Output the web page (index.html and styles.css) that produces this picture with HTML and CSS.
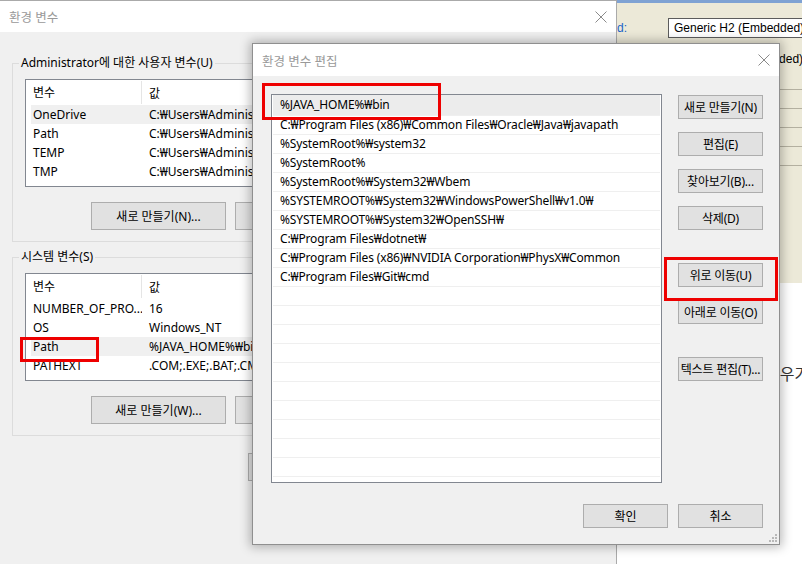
FILE: index.html
```html
<!DOCTYPE html>
<html lang="ko">
<head>
<meta charset="utf-8">
<title>환경 변수 편집</title>
<link rel="stylesheet" href="styles.css">
</head>
<body>
<div class="desktop">

  <!-- background application window (right) -->
  <div class="app">
    <div class="app-strip"></div>
    <div class="app-row app-row-first">
      <span class="app-label">d:</span>
      <span class="app-combo">Generic H2 (Embedded)</span>
    </div>
    <div class="app-row app-row-second">
      <span class="app-field">Generic H2 (Embedded)</span>
    </div>
    <div class="app-lines">
      <div class="app-line"></div>
      <div class="app-line"></div>
      <div class="app-line"></div>
      <div class="app-line"></div>
      <div class="app-line"></div>
    </div>
    <div class="app-white">
      <span class="app-text">경우가</span>
    </div>
  </div>

  <!-- back dialog: 환경 변수 -->
  <section class="win back">
    <header class="titlebar">
      <span class="title">환경 변수</span>
      <svg class="close" width="12" height="12" viewBox="0 0 12 12"><path d="M0.5 0.5L11.5 11.5M11.5 0.5L0.5 11.5" stroke="#8a8a8a" stroke-width="1" fill="none"/></svg>
    </header>
    <div class="back-body">
      <fieldset class="group group-user">
        <legend>Administrator에 대한 사용자 변수(U)</legend>
        <div class="varlist">
          <div class="var-head"><span class="c1">변수</span><span class="c2">값</span></div>
          <div class="var-row sel"><span class="c1">OneDrive</span><span class="c2">C:₩Users₩Administrator₩OneDrive</span></div>
          <div class="var-row"><span class="c1">Path</span><span class="c2">C:₩Users₩Administrator₩AppData₩Local</span></div>
          <div class="var-row"><span class="c1">TEMP</span><span class="c2">C:₩Users₩Administrator₩AppData₩Local₩Temp</span></div>
          <div class="var-row"><span class="c1">TMP</span><span class="c2">C:₩Users₩Administrator₩AppData₩Local₩Temp</span></div>
        </div>
        <div class="btnrow">
          <button class="btn btn-big">새로 만들기(N)...</button>
          <button class="btn btn-big">편집(E)...</button>
          <button class="btn btn-big">삭제(D)</button>
        </div>
      </fieldset>
      <fieldset class="group group-sys">
        <legend>시스템 변수(S)</legend>
        <div class="varlist">
          <div class="var-head"><span class="c1">변수</span><span class="c2">값</span></div>
          <div class="var-row"><span class="c1">NUMBER_OF_PRO...</span><span class="c2">16</span></div>
          <div class="var-row"><span class="c1">OS</span><span class="c2">Windows_NT</span></div>
          <div class="var-row sel"><span class="c1">Path</span><span class="c2">%JAVA_HOME%₩bin;C:₩Program Files</span></div>
          <div class="var-row"><span class="c1">PATHEXT</span><span class="c2">.COM;.EXE;.BAT;.CMD;.VBS</span></div>
        </div>
        <div class="btnrow">
          <button class="btn btn-big">새로 만들기(W)...</button>
          <button class="btn btn-big">편집(I)...</button>
          <button class="btn btn-big">삭제(L)</button>
        </div>
      </fieldset>
      <div class="back-footer">
        <button class="btn btn-big">확인</button>
        <button class="btn btn-big">취소</button>
      </div>
    </div>
  </section>

  <!-- front dialog: 환경 변수 편집 -->
  <section class="win front">
    <header class="titlebar">
      <span class="title">환경 변수 편집</span>
      <svg class="close" width="12" height="12" viewBox="0 0 12 12"><path d="M0.5 0.5L11.5 11.5M11.5 0.5L0.5 11.5" stroke="#8a8a8a" stroke-width="1" fill="none"/></svg>
    </header>
    <div class="front-body">
      <div class="pathlist">
        <div class="path-row sel">%JAVA_HOME%₩bin</div>
        <div class="path-row">C:₩Program Files (x86)₩Common Files₩Oracle₩Java₩javapath</div>
        <div class="path-row">%SystemRoot%₩system32</div>
        <div class="path-row">%SystemRoot%</div>
        <div class="path-row">%SystemRoot%₩System32₩Wbem</div>
        <div class="path-row">%SYSTEMROOT%₩System32₩WindowsPowerShell₩v1.0₩</div>
        <div class="path-row">%SYSTEMROOT%₩System32₩OpenSSH₩</div>
        <div class="path-row">C:₩Program Files₩dotnet₩</div>
        <div class="path-row">C:₩Program Files (x86)₩NVIDIA Corporation₩PhysX₩Common</div>
        <div class="path-row">C:₩Program Files₩Git₩cmd</div>
        <div class="path-row"></div>
        <div class="path-row"></div>
        <div class="path-row"></div>
        <div class="path-row"></div>
        <div class="path-row"></div>
        <div class="path-row"></div>
        <div class="path-row"></div>
        <div class="path-row"></div>
        <div class="path-row"></div>
        <div class="path-row"></div>
      </div>
      <div class="side-buttons">
        <button class="btn btn-side">새로 만들기(N)</button>
        <button class="btn btn-side">편집(E)</button>
        <button class="btn btn-side">찾아보기(B)...</button>
        <button class="btn btn-side">삭제(D)</button>
        <button class="btn btn-side gap-lg">위로 이동(U)</button>
        <button class="btn btn-side">아래로 이동(O)</button>
        <button class="btn btn-side gap-lg">텍스트 편집(T)...</button>
      </div>
      <div class="front-footer">
        <button class="btn btn-foot">확인</button>
        <button class="btn btn-foot">취소</button>
      </div>
    </div>
    <svg class="grip" width="9" height="9" viewBox="0 0 9 9">
      <rect x="7" y="1" width="2" height="2" fill="#b8b8b8"/>
      <rect x="4" y="4" width="2" height="2" fill="#b8b8b8"/>
      <rect x="7" y="4" width="2" height="2" fill="#b8b8b8"/>
      <rect x="1" y="7" width="2" height="2" fill="#b8b8b8"/>
      <rect x="4" y="7" width="2" height="2" fill="#b8b8b8"/>
      <rect x="7" y="7" width="2" height="2" fill="#b8b8b8"/>
    </svg>
  </section>

  <!-- annotation boxes -->
  <div class="mark mark-java"></div>
  <div class="mark mark-up"></div>
  <div class="mark mark-path"></div>
</div>
</body>
</html>
```
FILE: styles.css
```css
* { box-sizing: border-box; }
html, body { margin: 0; padding: 0; }
body {
  font-family: "Noto Sans", "Noto Sans CJK KR", sans-serif;
  font-size: 12px;
  color: #000;
  background: #fff;
}
.desktop {
  position: relative;
  width: 802px;
  height: 564px;
  overflow: hidden;
  background: #fff;
}

/* ---------- background app ---------- */
.app {
  position: absolute;
  left: 616px;
  top: 0;
  width: 186px;
  height: 564px;
  background: #ece9d8;
  display: flex;
  flex-direction: column;
  overflow: hidden;
  font-family: "Liberation Sans", sans-serif;
  font-size: 12px;
}
.app-strip { height: 3px; background: #7fa2d3; flex: none; }
.app-row { display: flex; align-items: center; height: 20px; flex: none; }
.app-row-first { margin-top: 15px; }
.app-label { color: #2164c8; width: 52px; flex: none; padding-left: 1px; }
.app-combo {
  flex: none;
  height: 20px;
  line-height: 18px;
  padding-left: 5px;
  background: #fff;
  border: 1px solid #5c5c5c;
  white-space: nowrap;
  width: 150px;
}
.app-row-second { margin-top: 10px; height: 22px; padding-left: 52px; }
.app-field { white-space: nowrap; padding-left: 5px; width: 150px; flex: none; }
.app-lines { margin-top: 1px; flex: none; }
.app-line { height: 19px; border-bottom: 1px solid #b4b0a0; }
.app-white {
  flex: 1;
  margin-top: 117px;
  background: #fff;
  padding: 80px 0 0 149px;
  font-family: "Noto Sans CJK KR", sans-serif;
  font-size: 16px;
  line-height: 20px;
  color: #333;
}
.app-text { white-space: nowrap; }

/* ---------- windows ---------- */
.win {
  position: absolute;
  background: #f0f0f0;
}
.titlebar {
  display: flex;
  align-items: center;
  justify-content: space-between;
  background: #fff;
  color: #999;
  font-size: 12.5px;
}
.close { display: block; }

.back {
  left: 0;
  top: 0;
  width: 617px;
  height: 600px;
  border-top: 1px solid #aaa;
  border-right: 1px solid #aaa;
}
.back .titlebar { height: 31px; padding: 0 9px 0 9px; }
.back-body { padding: 0 12px; }

.group {
  margin: 0;
  border: 1px solid #dcdcdc;
  padding: 8px 12px 11px 12px;
  min-width: 0;
}
.group legend {
  padding: 0 2px;
  margin-left: -6px;
  line-height: 16px;
  color: #000;
}
.group-user { margin-top: 23px; }
.group-sys { margin-top: 7px; }

.varlist {
  height: 108px;
  width: 560px;
  background: #fff;
  border: 1px solid #828790;
  padding-left: 5px;
}
.var-head, .var-row { display: flex; white-space: nowrap; }
.var-head { height: 25px; align-items: center; }
.var-head .c1 { border-right: 1px solid #e5e5e5; height: 23px; line-height: 23px; }
.var-row { height: 19px; line-height: 19px; }
.var-row.sel { background: #f0f0f0; }
.c1 { width: 111px; padding-left: 2px; flex: none; overflow: hidden; }
.c2 { padding-left: 7px; }

.btn {
  font-family: inherit;
  font-size: 12px;
  color: #000;
  background: #e1e1e1;
  border: 1px solid #adadad;
  border-radius: 0;
  padding: 0;
  margin: 0;
  white-space: nowrap;
}
.btnrow { display: flex; gap: 9px; margin-top: 15px; padding-left: 66px; }
.btn-big { width: 135px; height: 28px; }

.back-footer { display: flex; gap: 9px; margin-top: 17px; padding-left: 236px; }

/* ---------- front dialog ---------- */
.front {
  left: 252px;
  top: 43px;
  width: 528px;
  height: 502px;
  border: 1px solid #8f8f8f;
  box-shadow: 0 0 10px 2px rgba(0, 0, 0, 0.28);
}
.front .titlebar { height: 32px; padding: 0 9px 0 9px; }
.front-body {
  display: grid;
  grid-template-columns: 391px 85px;
  column-gap: 16px;
  padding: 18px 16px 0 18px;
}
.pathlist {
  height: 389px;
  background: #fff;
  border: 1px solid #828790;
  padding: 0 1px;
  overflow: hidden;
}
.path-row {
  height: 19px;
  line-height: 18px;
  padding-left: 7px;
  border-bottom: 1px solid #efefef;
  white-space: nowrap;
  letter-spacing: -0.15px;
}
.path-row.sel { background: #ececec; height: 21px; line-height: 20px; }

.side-buttons {
  display: flex;
  flex-direction: column;
  padding-top: 1px;
}
.btn-side { height: 24px; width: 85px; margin-bottom: 13px; letter-spacing: -0.2px; }
.btn-side.gap-lg { margin-top: 20px; }

.front-footer {
  grid-column: 1 / span 2;
  display: flex;
  justify-content: flex-end;
  gap: 10px;
  margin-top: 21px;
}
.btn-foot { width: 85px; height: 24px; }

.grip { position: absolute; right: 2px; bottom: 2px; }

/* ---------- annotation marks ---------- */
.mark {
  position: absolute;
  border: 3px solid #ee0000;
}
.mark-java { left: 262px; top: 83px; width: 179px; height: 37px; }
.mark-up { left: 664px; top: 257px; width: 114px; height: 44px; }
.mark-path { left: 20px; top: 337px; width: 79px; height: 25px; }
```
